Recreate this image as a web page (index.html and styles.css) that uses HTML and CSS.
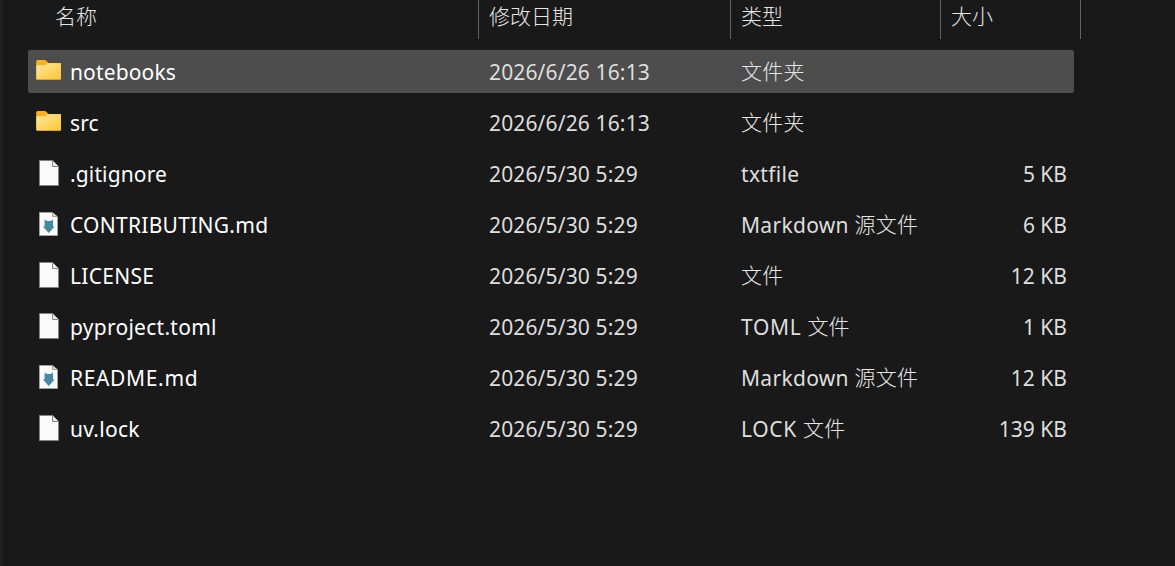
FILE: index.html
```html
<!DOCTYPE html>
<html lang="zh-CN">
<head>
  <meta charset="UTF-8" />
  <meta name="viewport" content="width=device-width, initial-scale=1.0"/>
  <title>文件列表</title>
  <link rel="stylesheet" href="styles.css">
</head>
<body>

<!-- Icons -->
<svg class="icon-defs" width="0" height="0">
  <defs>
    <linearGradient id="folderFront" x1="0" y1="0" x2="1" y2="1">
      <stop offset="0" stop-color="#ffe8a3"/>
      <stop offset="1" stop-color="#fdc42d"/>
    </linearGradient>
    <symbol id="folder" viewBox="0 0 26 20">
      <path d="M.2 1.6Q.2 0 1.6 0H8.6Q9.6 0 10.3.8L12.4 3H25V19H.2Z" fill="#f9b11d"/>
      <path d="M.4 5.2H8.8Q9.8 5.2 10.5 4.5L11.6 3.2H24.2Q25 3.2 25 4V18.6Q25 20 23.6 20H1.4Q.4 20 .4 18.6Z" fill="url(#folderFront)"/>
      <path d="M.4 18.6Q.6 19.6 1.4 19.6H23.8Q24.8 19.6 25 18.6" fill="none" stroke="#d79a20" stroke-width=".9"/>
    </symbol>
    <symbol id="file" viewBox="0 0 21 26">
      <path d="M.5.5H13.5L19.5 6.5V25.5H.5Z" fill="#fafafa" stroke="#858585"/>
      <path d="M13.5.5V6.5H19.5" fill="#e9e9e9" stroke="#858585"/>
    </symbol>
    <symbol id="markdown" viewBox="0 0 21 26">
      <path d="M.5 1.5H13.5L18.5 6V24.5H.5Z" fill="#fafafa" stroke="#a0a0a0"/>
      <path d="M13.5 1.5V5.5H18.5" fill="#d5d5d5" stroke="#a0a0a0"/>
      <path d="M5.6 8.6L7.8 10H11.7L14 8.6V15.6H15.7L9.8 22L3.8 15.6H5.6Z" fill="#4488a8"/>
    </symbol>
  </defs>
</svg>

<div class="header">
  <div class="head-cell head-name"><span>名称</span></div>
  <div class="head-cell"><span>修改日期</span></div>
  <div class="head-cell"><span>类型</span></div>
  <div class="head-cell"><span>大小</span></div>
</div>

<div class="list">
  <div class="row selected">
    <div class="name"><svg class="icon folder"><use href="#folder"/></svg><span>notebooks</span></div>
    <div class="date"><span>2026/6/26 16:13</span></div>
    <div class="type"><span class="cjk">文件夹</span></div>
    <div class="size"></div>
  </div>
  <div class="row">
    <div class="name"><svg class="icon folder"><use href="#folder"/></svg><span>src</span></div>
    <div class="date"><span>2026/6/26 16:13</span></div>
    <div class="type"><span class="cjk">文件夹</span></div>
    <div class="size"></div>
  </div>
  <div class="row">
    <div class="name"><svg class="icon file"><use href="#file"/></svg><span>.gitignore</span></div>
    <div class="date"><span>2026/5/30 5:29</span></div>
    <div class="type"><span>txtfile</span></div>
    <div class="size"><span>5 KB</span></div>
  </div>
  <div class="row">
    <div class="name"><svg class="icon file"><use href="#markdown"/></svg><span class="wide">CONTRIBUTING.md</span></div>
    <div class="date"><span>2026/5/30 5:29</span></div>
    <div class="type"><span>Markdown <span class="cjk">源文件</span></span></div>
    <div class="size"><span>6 KB</span></div>
  </div>
  <div class="row">
    <div class="name"><svg class="icon file"><use href="#file"/></svg><span class="wide">LICENSE</span></div>
    <div class="date"><span>2026/5/30 5:29</span></div>
    <div class="type"><span class="cjk">文件</span></div>
    <div class="size"><span>12 KB</span></div>
  </div>
  <div class="row">
    <div class="name"><svg class="icon file"><use href="#file"/></svg><span class="wide">pyproject.toml</span></div>
    <div class="date"><span>2026/5/30 5:29</span></div>
    <div class="type"><span class="wider">TOML <span class="cjk">文件</span></span></div>
    <div class="size"><span>1 KB</span></div>
  </div>
  <div class="row">
    <div class="name"><svg class="icon file"><use href="#markdown"/></svg><span class="wider">README.md</span></div>
    <div class="date"><span>2026/5/30 5:29</span></div>
    <div class="type"><span>Markdown <span class="cjk">源文件</span></span></div>
    <div class="size"><span>12 KB</span></div>
  </div>
  <div class="row">
    <div class="name"><svg class="icon file"><use href="#file"/></svg><span class="wide">uv.lock</span></div>
    <div class="date"><span>2026/5/30 5:29</span></div>
    <div class="type"><span class="wider">LOCK <span class="cjk">文件</span></span></div>
    <div class="size"><span>139 KB</span></div>
  </div>
</div>

</body>
</html>
```
FILE: styles.css
```css
* {
  box-sizing: border-box;
}
body {
  margin: 0;
  height: 566px;
  overflow: hidden;
  background: #191919;
  border-left: 3px solid #202020;
  color: #dedede;
  font-family: "Noto Sans", "Noto Sans CJK SC", sans-serif;
  font-size: 21px;
  line-height: 30px;
}
.icon-defs {
  display: block;
}
.header {
  display: grid;
  grid-template-columns: 451px 252px 210px 140px;
  width: 1053px;
  height: 39px;
  margin-left: 25px;
  color: #e6e6e6;
  font-weight: 300;
}
.head-cell {
  padding: 1px 0 0 10px;
  border-right: 1px solid #636363;
}
.head-name {
  padding-left: 27px;
}
.list {
  display: flex;
  flex-direction: column;
  gap: 8px;
  width: 1046px;
  margin: 11px 0 0 25px;
}
.row {
  display: grid;
  grid-template-columns: 451px 252px 210px 126px;
  align-items: center;
  height: 43px;
  border-radius: 2px;
  white-space: nowrap;
}
.selected {
  background: #4d4d4d;
}
.name {
  display: flex;
  align-items: center;
  color: #ffffff;
  letter-spacing: 0.14px;
}
.wide {
  letter-spacing: 0.27px;
}
.wider {
  letter-spacing: 0.65px;
}
.icon {
  flex: none;
}
.folder {
  width: 26px;
  height: 20px;
  margin: 0 8px 3px 8px;
}
.file {
  width: 21px;
  height: 26px;
  margin: 0 10px 1px 11px;
}
.date, .type {
  padding-left: 10px;
}
.date {
  letter-spacing: 0.14px;
}
.type {
  letter-spacing: 0.3px;
}
.cjk {
  color: #e6e6e6;
  font-weight: 300;
  letter-spacing: 0.2px;
  vertical-align: 1px;
}
.size {
  text-align: right;
}
```
